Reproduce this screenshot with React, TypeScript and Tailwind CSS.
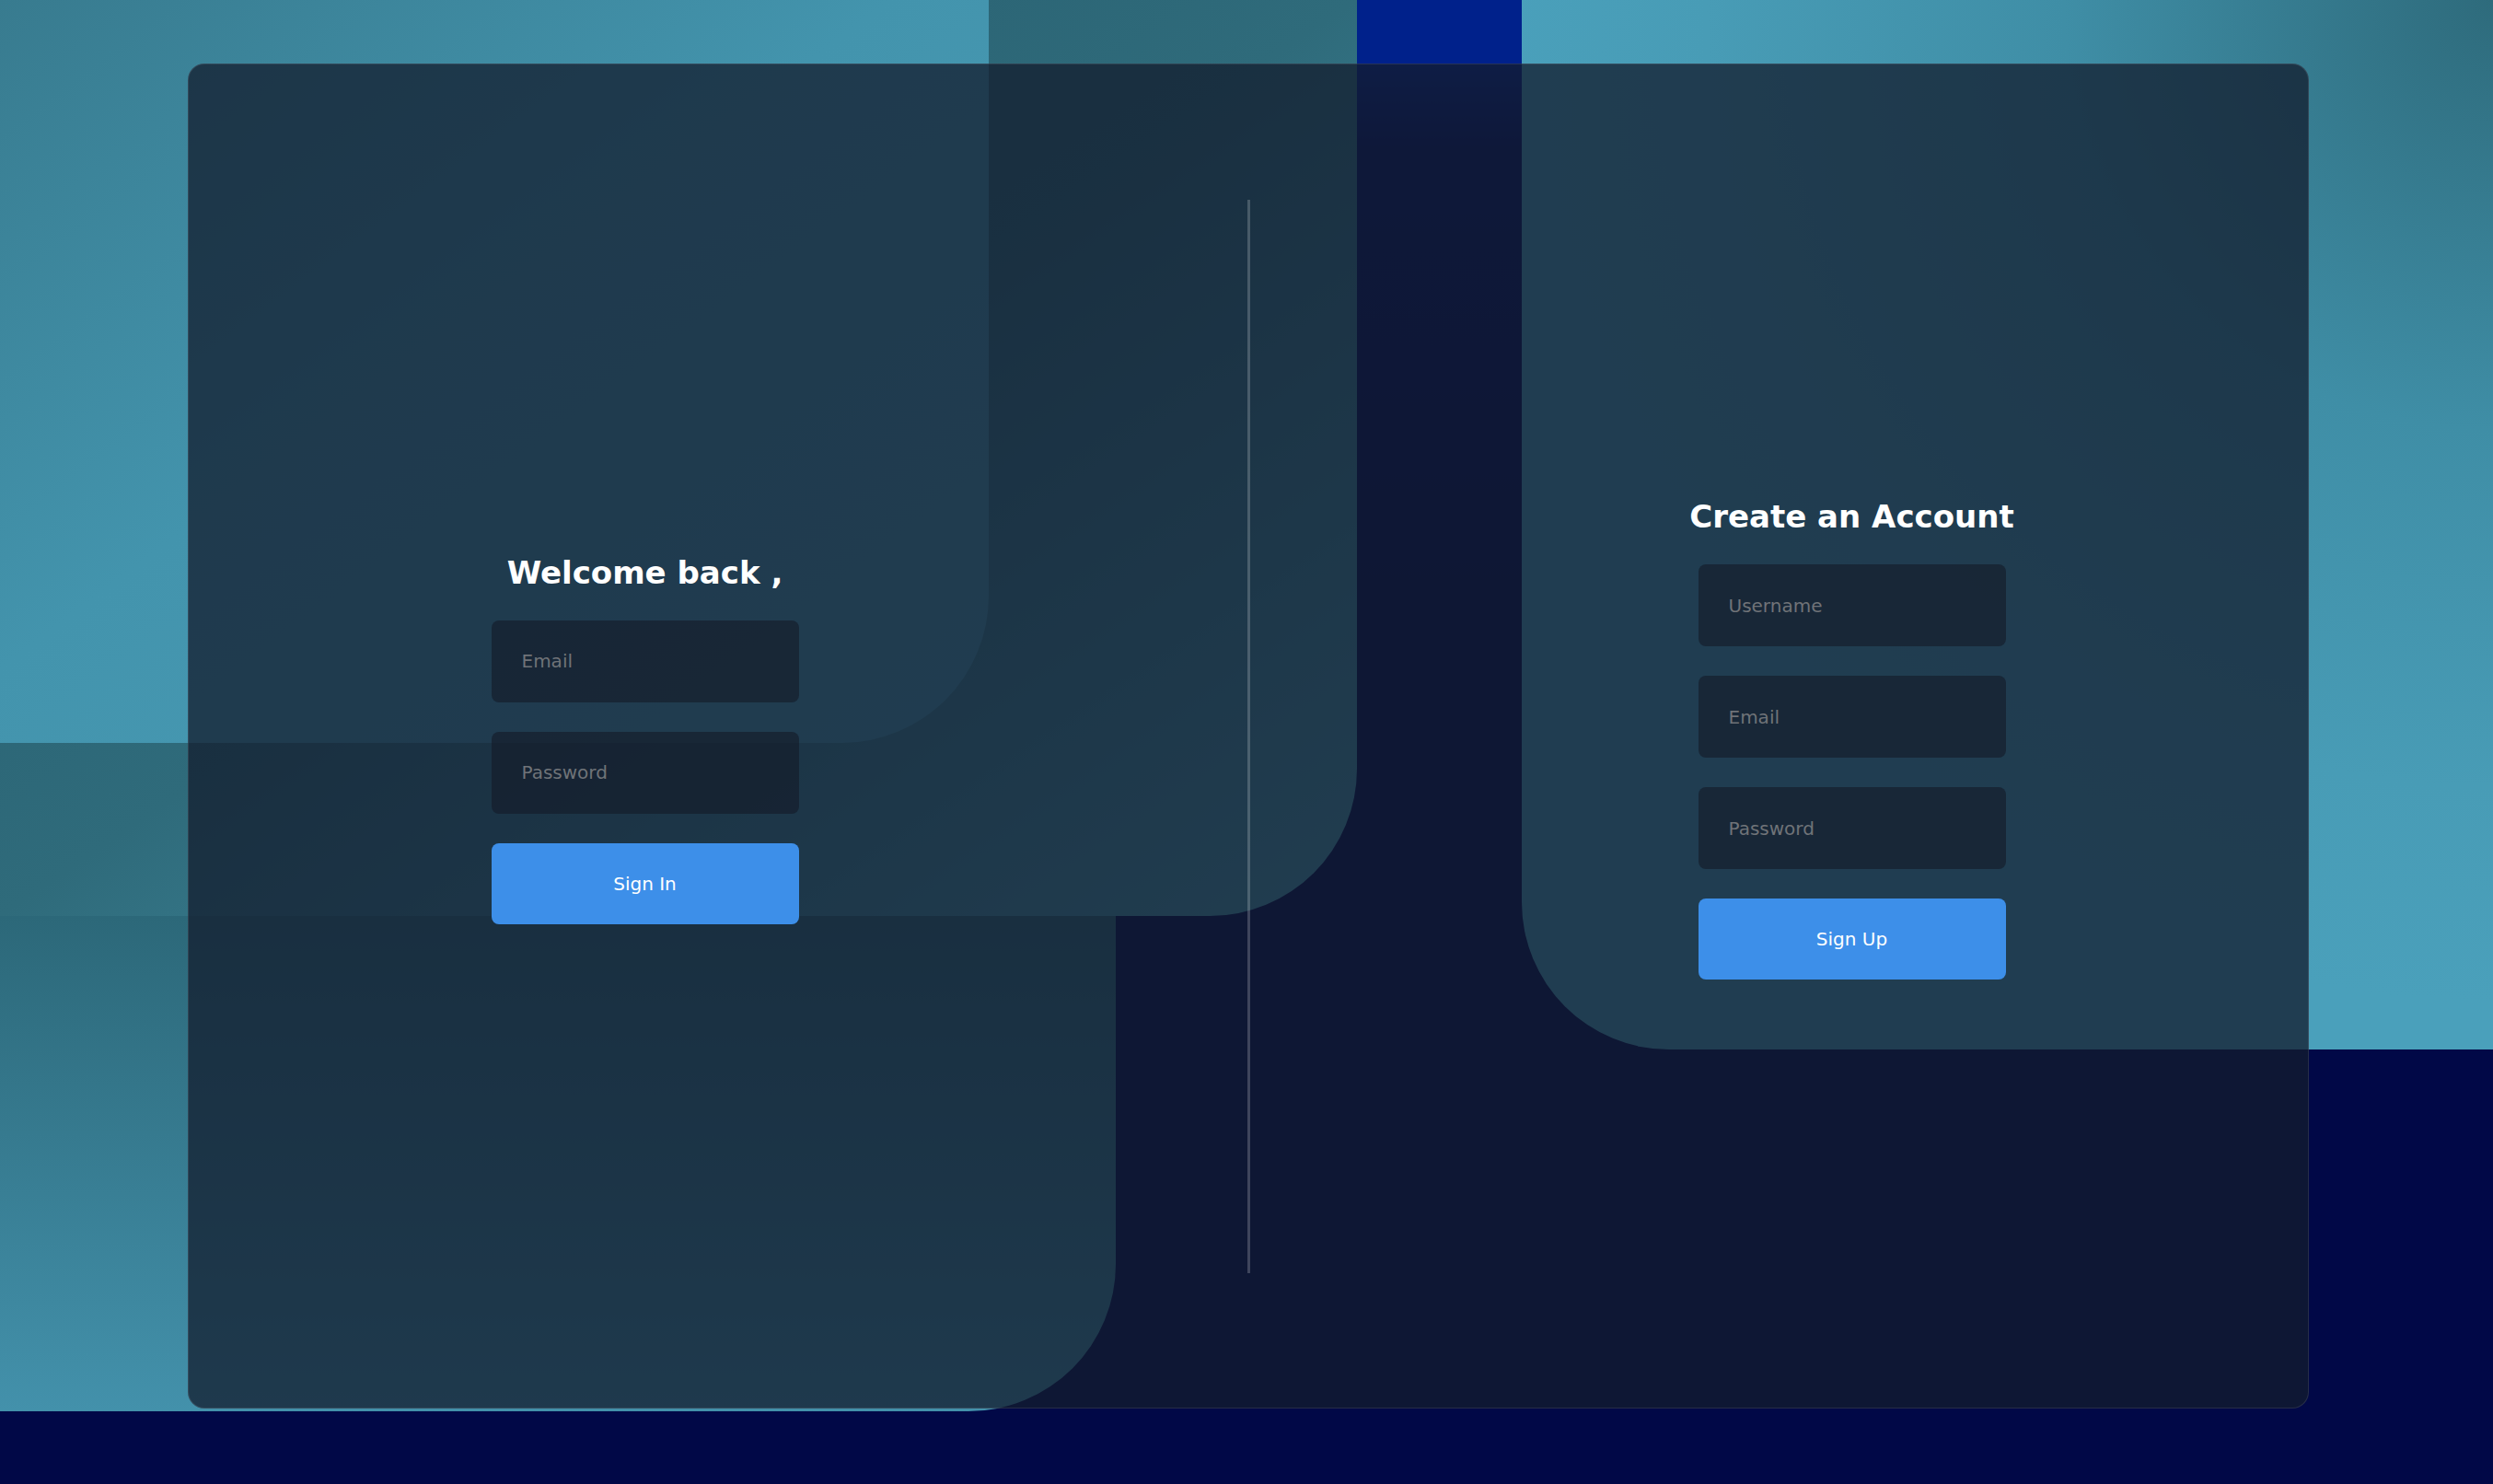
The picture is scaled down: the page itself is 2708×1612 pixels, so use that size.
import React from 'react';

// background shapes sit behind the glass card
const blocks = [
  {
    key: 'teal',
    className:
      "left-0 top-0 w-[1474px] h-[995px] rounded-br-[160px] bg-[linear-gradient(to_bottom_right,#25596a_0%,#2f6b7b_50%,#4ba0b7_100%)]",
  },
  {
    key: 'cyan-top',
    className:
      "left-0 top-0 w-[1074px] h-[807px] rounded-br-[160px] bg-[linear-gradient(to_bottom_right,#387b8f_0%,#4394ad_45%,#4a9db7_100%)]",
  },
  {
    key: 'cyan-bottom',
    className:
      "left-0 top-[995px] w-[1212px] h-[538px] rounded-br-[160px] bg-[linear-gradient(to_bottom,#2c6879_0%,#4391ab_100%)]",
  },
  {
    key: 'blue',
    className:
      "left-[1474px] top-0 w-[179px] h-[700px] bg-[linear-gradient(to_bottom,#00218b_0px,#00218b_69px,#020d5e_160px,#010847_100%)]",
  },
  {
    key: 'cyan-right',
    className:
      "left-[1653px] top-0 w-[1055px] h-[1140px] rounded-bl-[160px] bg-[radial-gradient(circle_at_top_right,#2e6b7c_0%,#3f8ea6_30%,#489cb6_55%,#4aa0bb_70%)]",
  },
];

function Field({ placeholder, type = 'text' }: { placeholder: string; type?: string }) {
  return (
    <input
      type={type}
      placeholder={placeholder}
      className="h-[89px] w-full rounded-lg bg-[#141b29]/65 px-[33px] text-[20px] text-white outline-none placeholder:text-[#6f7378]"
    />
  );
}

function AuthForm({ title, fields, action }: { title: string; fields: { placeholder: string; type?: string }[]; action: string }) {
  return (
    <form className="flex w-[334px] flex-col items-center gap-8" onSubmit={(e) => e.preventDefault()}>
      <h2 className="whitespace-nowrap text-[34px] font-bold leading-[40px] text-white">{title}</h2>
      {fields.map((f) => (
        <Field key={f.placeholder} placeholder={f.placeholder} type={f.type} />
      ))}
      <button type="submit" className="h-[88px] w-full rounded-lg bg-[#3d8fe9] text-[20px] text-white">
        {action}
      </button>
    </form>
  );
}

export default function App() {
  return (
    <div className="relative min-h-screen w-full overflow-hidden bg-[#010847] pt-[69px] font-['DejaVu_Sans',sans-serif]">
      {blocks.map((b) => (
        <div key={b.key} className={`absolute ${b.className}`} />
      ))}

      <div className="relative z-10 ml-[204px] flex h-[1461px] w-[2304px] rounded-[18px] border border-white/10 bg-[#131c2e]/75">
        <section className="flex flex-1 items-center justify-center pt-[6px]">
          <AuthForm
            title="Welcome back ,"
            fields={[{ placeholder: 'Email', type: 'email' }, { placeholder: 'Password', type: 'password' }]}
            action="Sign In"
          />
        </section>

        <div className="flex w-[320px] items-center justify-center">
          <div className="h-[1166px] w-[3px] bg-white/20" />
        </div>

        <section className="flex flex-1 items-center justify-center pt-[6px]">
          <AuthForm
            title="Create an Account"
            fields={[
              { placeholder: 'Username' },
              { placeholder: 'Email', type: 'email' },
              { placeholder: 'Password', type: 'password' },
            ]}
            action="Sign Up"
          />
        </section>
      </div>
    </div>
  );
}
